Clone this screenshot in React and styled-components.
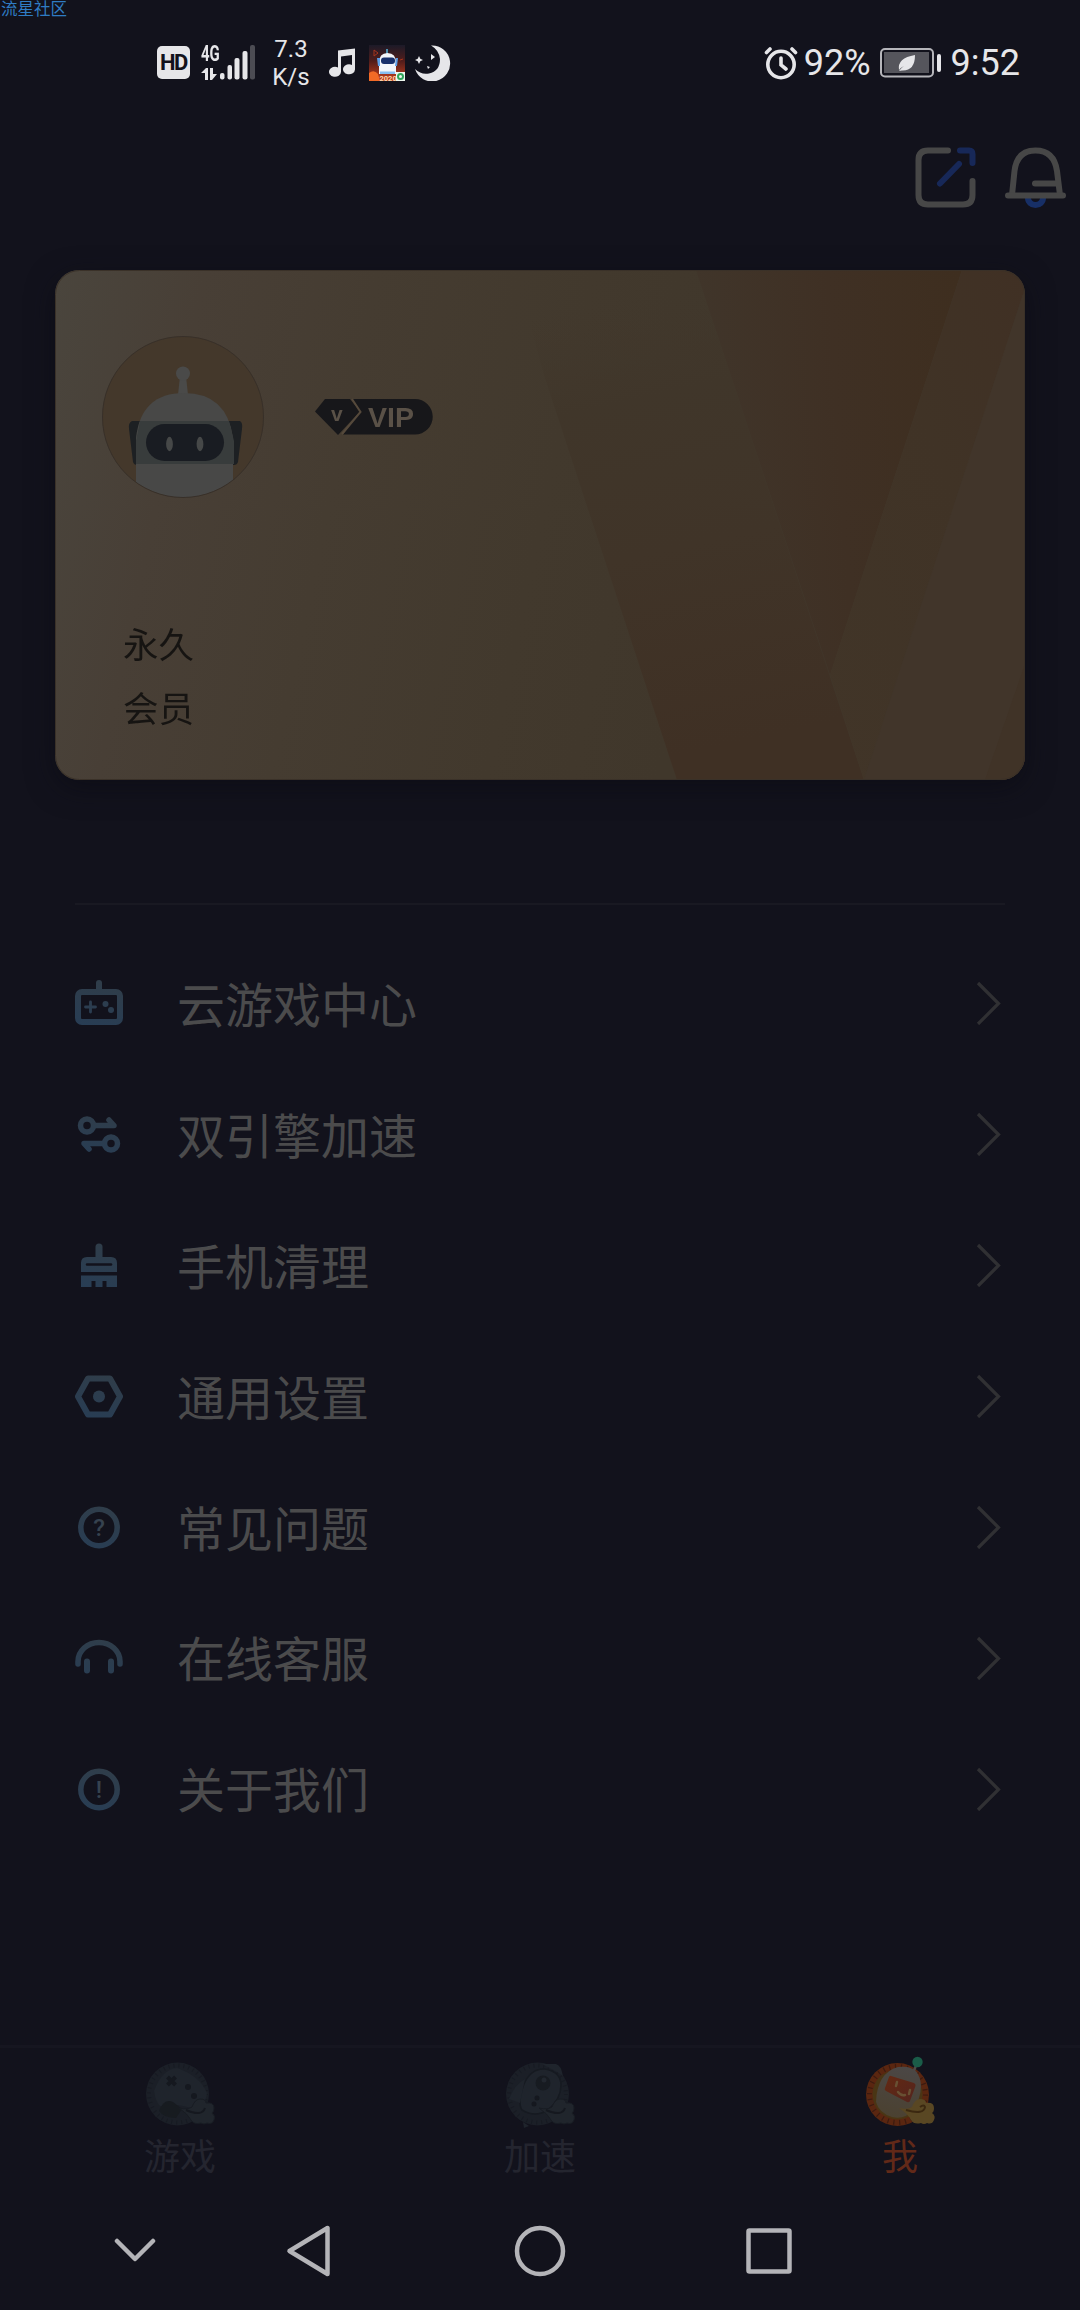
import React from 'react';
import styled, { createGlobalStyle } from 'styled-components';

const GlobalStyle = createGlobalStyle`
  :root {
    --bg: #12121c;
    --status: #e6e6e9;
    --cjk: 'Noto Sans CJK SC', sans-serif;
  }
  * {
    box-sizing: border-box;
  }
  body {
    margin: 0;
    background: var(--bg);
    font-family: Roboto, var(--cjk);
  }
  svg {
    display: block;
    flex: none;
  }
`;

const Screen = styled.main`
  position: relative;
  display: flex;
  flex-direction: column;
  width: 1080px;
  height: 2310px;
  background: var(--bg);
  overflow: hidden;
`;

const Watermark = styled.span`
  position: absolute;
  top: 0;
  left: 1px;
  color: #2f7cc4;
  font: 16.5px/16px var(--cjk);
`;

const StatusBar = styled.header`
  display: flex;
  justify-content: space-between;
  height: 125px;
  padding: 0 60px 0 157px;
  color: var(--status);
`;

const StatusGroup = styled.div`
  display: flex;
  align-items: center;
  height: 125px;
`;

const HdBadge = styled.span`
  display: flex;
  align-items: center;
  justify-content: center;
  width: 33px;
  height: 33px;
  border-radius: 5px;
  background: var(--status);
  color: var(--bg);
  font-size: 22px;
  font-weight: 700;
  letter-spacing: -1.5px;
`;

const Signal = styled.div`
  display: flex;
  align-items: flex-end;
  width: 54px;
  height: 35px;
  margin-left: 11px;
`;

const Network = styled.div`
  display: flex;
  flex-direction: column;
  justify-content: space-between;
  width: 18px;
  height: 35px;
  span {
    font-size: 22px;
    font-weight: 700;
    line-height: 18px;
    height: 18px;
    transform: scaleX(0.68);
    transform-origin: left;
  }
`;

const Speed = styled.div`
  width: 38px;
  margin-left: 17px;
  font-size: 24px;
  line-height: 28px;
  text-align: center;
`;

const StatusIcon = styled.svg`
  margin-left: ${({ $gap }) => $gap}px;
`;

const StatusText = styled.span`
  font-size: 36px;
  line-height: 42px;
  margin-left: ${({ $gap }) => $gap}px;
`;

const Toolbar = styled.div`
  display: flex;
  justify-content: flex-end;
  gap: 29px;
  height: 145px;
  padding: 22px 14px 0 0;
`;

const CardShadow = styled.div`
  display: flex;
  filter: drop-shadow(0 8px 14px rgba(8, 8, 16, 0.5));
`;

const Card = styled.section`
  position: relative;
  display: flex;
  flex-direction: column;
  justify-content: space-between;
  width: 970px;
  height: 510px;
  margin-left: 55px;
  padding: 66px 47px 38px;
  border-radius: 24px;
  overflow: hidden;
  background: linear-gradient(
    102deg,
    #4a453d 0%,
    #483f36 14%,
    #453c31 30%,
    #42392d 50%,
    #40372b 66%
  );
`;

const Facets = styled.svg`
  position: absolute;
  top: 0;
  left: 0;
`;

const Profile = styled.div`
  position: relative;
  display: flex;
  align-items: center;
`;

const VipBadge = styled.svg`
  margin-left: 51px;
`;

const Membership = styled.div`
  position: relative;
  padding-left: 21px;
  color: #161412;
  font-size: 35.5px;
  line-height: 64px;
  p {
    margin: 0;
  }
`;

const Divider = styled.hr`
  width: 930px;
  height: 2px;
  margin: 123px 0 33px 75px;
  border: 0;
  background: #191922;
`;

const Menu = styled.ul`
  margin: 0;
  padding: 0 75px;
  list-style: none;
`;

const MenuItem = styled.li`
  display: flex;
  align-items: center;
  height: 130.9px;
  color: #4b4b4c;
  span {
    flex: 1;
    margin-left: 54px;
    padding-top: 7px;
    font-size: 48px;
    line-height: 72px;
  }
`;

const TabBar = styled.nav`
  display: grid;
  grid-template-columns: repeat(3, 1fr);
  height: 142px;
  margin-top: auto;
  border-top: 3px solid #161620;
`;

const Tab = styled.div`
  display: flex;
  flex-direction: column;
  align-items: center;
  padding-top: 8px;
  color: ${({ $active }) => ($active ? '#622918' : '#24252f')};
  font-size: 36px;
  line-height: 54px;
`;

const SystemNav = styled.footer`
  display: flex;
  align-items: center;
  height: 123px;
  padding: 4px 0 0 113px;
`;

const NavIcon = styled.svg`
  margin-left: ${({ $gap }) => $gap || 0}px;
  fill: none;
  stroke: #b4b4b8;
  stroke-width: 4.5;
  stroke-linecap: round;
  stroke-linejoin: round;
`;

function StatusIcons() {
  return (
    <StatusBar>
      <StatusGroup>
        <HdBadge>HD</HdBadge>
        <Signal>
          <Network>
            <span>4G</span>
            <svg width="17" height="12" viewBox="0 0 17 12" fill="#e6e6e9">
              <path d="M0 5 5 0h2v12H4V5ZM9 0h3v6h4l-5 6H9Z" />
            </svg>
          </Network>
          <svg width="36" height="35" viewBox="0 0 36 35" fill="#e6e6e9">
            <rect x="1" y="28" width="4.5" height="6.5" rx="2" />
            <rect x="8.5" y="20" width="4.5" height="14.5" rx="2" />
            <rect x="15.5" y="13" width="5" height="21.5" rx="2" />
            <rect x="23.5" y="6" width="5" height="28.5" rx="2" />
            <rect x="31" y="0" width="5" height="34.5" rx="2" fill="#4c4c53" />
          </svg>
        </Signal>
        <Speed>
          7.3
          <br />
          K/s
        </Speed>
        <StatusIcon $gap={19} width="28" height="30" viewBox="0 0 28 30">
          <path
            d="M9 2.5 26 .5v21a6 5 0 1 1-3-4.5V7L12 8.5v15.500a6 5 0 1 1-3-4.5Z"
            fill="#e6e6e9"
          />
        </StatusIcon>
        <StatusIcon $gap={12} width="36" height="36" viewBox="0 0 36 36">
          <defs>
            <linearGradient id="app" x1="0" y1="0" x2="0" y2="1">
              <stop offset="0" stopColor="#1c1a28" />
              <stop offset="0.45" stopColor="#521d1b" />
              <stop offset="1" stopColor="#c8401c" />
            </linearGradient>
          </defs>
          <path d="M0 0h36v36H0z" fill="url(#app)" />
          <path d="m5 5 4 3-4 3zM31 15l3-1" stroke="#a8341c" fill="none" />
          <path d="M0 28q5-4 9 1l2 7H0z" fill="#f26a26" />
          <path d="M18 4v6" stroke="#58b7dc" strokeWidth="1.5" />
          <path d="M10 18q0-10 8.5-10T27 18v11H10z" fill="#f2f5fa" />
          <path d="M8 13h3v8H9zM27 13h2l-1 8h-2z" fill="#5c9ee6" />
          <rect x="12" y="12.5" width="14" height="6.5" rx="3" fill="#18306b" />
          <path d="M11 26.500h15V29H11z" fill="#86bdf0" />
          <text
            x="10.5"
            y="35.5"
            fill="#ffd9b0"
            fontSize="7.5"
            fontWeight="700"
            fontFamily="Roboto"
          >
            2020
          </text>
          <path d="M27 27h9v9h-9z" fill="#eef7ee" />
          <circle cx="31.5" cy="31.5" r="2.500" fill="none" stroke="#2fa65a" strokeWidth="2" />
        </StatusIcon>
        <StatusIcon $gap={10} width="36" height="36" viewBox="0 0 36 36" fill="#e6e6e9">
          <path d="M16 .5A18 18 0 1 1 0 24q6 6 14 4.500Q25 26 25 14 24 5 16 .5Z" />
          <path d="m4 11 1.300 2.700L8 15l-2.700 1.300L4 19l-1.300-2.700L0 15l2.700-1.300zM16 9l4 3-4 3zM12 21l3 1-2 2z" />
        </StatusIcon>
      </StatusGroup>
      <StatusGroup>
        <svg
          width="34"
          height="34"
          viewBox="0 0 34 34"
          fill="none"
          stroke="#e6e6e9"
          strokeWidth="3.6"
          strokeLinecap="round"
        >
          <circle cx="17" cy="18.5" r="13.2" />
          <path d="M17 12v7l5 4M2.500 6.500 6 3M28 3l3.500 3.500" />
        </svg>
        <StatusText $gap={6}>92%</StatusText>
        <StatusIcon $gap={9} width="61" height="30" viewBox="0 0 61 30">
          <rect x="1" y="1" width="52" height="27.5" rx="4" fill="none" stroke="#b5b5ba" strokeWidth="2" />
          <path d="M4 4h45v21H4z" fill="#55555c" />
          <path d="M19 23q2-3 5-5-4 2-5 4-2-12 16-15 0 16-13 15.500Z" fill="#e6e6e9" />
          <rect x="57" y="6" width="4" height="18" rx="2" fill="#e6e6e9" />
        </StatusIcon>
        <StatusText $gap={10}>9:52</StatusText>
      </StatusGroup>
    </StatusBar>
  );
}

function ShareIcon() {
  return (
    <svg
      width="61"
      height="61"
      viewBox="0 0 61 61"
      fill="none"
      stroke="#474747"
      strokeWidth="6"
      strokeLinecap="round"
    >
      <path d="M33 3.500H13Q3.500 3.500 3.500 13v35q0 9.500 9.500 9.500h35q9.500 0 9.500-9.500V34" />
      <path d="M45 3.500h9q3.500 0 3.500 3.500v9M25 36.500 44 17" stroke="#172858" />
    </svg>
  );
}

function BellIcon() {
  return (
    <svg
      width="61"
      height="61"
      viewBox="0 0 61 61"
      fill="none"
      stroke="#474747"
      strokeWidth="6"
      strokeLinecap="round"
    >
      <path d="M23 51a7.500 7 0 0 0 15 0" stroke="#172f66" />
      <path d="M7 48 9.500 24Q12 3.500 30.500 3.500T52 24l3 24M30 36.500h23" />
      <path d="M3 48.500h55" />
    </svg>
  );
}

function Avatar() {
  return (
    <svg width="162" height="162" viewBox="0 0 162 162">
      <defs>
        <clipPath id="round">
          <circle cx="81" cy="81" r="80.5" />
        </clipPath>
      </defs>
      <g clipPath="url(#round)">
        <path d="M0 0h162v162H0z" fill="#44382b" />
        <path d="M30 85h108q3 2 2 8l-4 33q-1 3-4 3H35q-3 0-4-3l-4-33q-1-6 3-8Z" fill="#1d2023" />
        <path d="M78 40h6l2 19h-10Z" fill="#4a4a49" />
        <circle cx="81" cy="37.5" r="7" fill="#4a4a49" />
        <path d="M34 162v-60Q39 57 82 57t49 45v60Z" fill="#484847" />
        <path d="M38 85h89l5 20v23H34v-23Z" fill="#383c3c" />
        <rect x="44" y="88" width="78" height="37" rx="18.5" fill="#191c22" />
        <ellipse cx="67.5" cy="108" rx="3.4" ry="7.2" fill="#464848" />
        <ellipse cx="98" cy="108" rx="3.4" ry="7.2" fill="#464848" />
      </g>
      <circle cx="81" cy="81" r="80.5" fill="none" stroke="#383029" />
    </svg>
  );
}

function Vip() {
  return (
    <VipBadge width="118" height="38" viewBox="0 0 118 38">
      <path d="M37 1h63a17.500 17.500 0 0 1 0 35.500H28l17-22Z" fill="#17171a" />
      <path d="M10 1h25l10 12.500L23 37 0 13.500Z" fill="#17171a" />
      <path d="m37 1 8.500 13L27 36" fill="none" stroke="#55493b" strokeWidth="2" />
      <g fill="#5a5147" fontFamily="Liberation Sans" fontWeight="700">
        <text x="16" y="23" fontSize="21">
          v
        </text>
        <text x="53" y="29.3" fontSize="28.5">
          VIP
        </text>
      </g>
    </VipBadge>
  );
}

function MembershipCard() {
  return (
    <CardShadow>
      <Card>
        <Facets width="970" height="510" viewBox="0 0 970 510">
          <defs>
            <linearGradient id="wedge" x1="0" y1="0.1" x2="1" y2="0">
              <stop offset="0" stopColor="#40352a" />
              <stop offset="0.5" stopColor="#3f3024" />
              <stop offset="1" stopColor="#3e2e1f" />
            </linearGradient>
            <linearGradient id="middle" x1="0" y1="0" x2="0.15" y2="1">
              <stop offset="0.1" stopColor="#41372b" stopOpacity="0" />
              <stop offset="0.3" stopColor="#40362a" />
              <stop offset="0.6" stopColor="#403428" />
              <stop offset="1" stopColor="#3f3024" />
            </linearGradient>
            <linearGradient id="strip" x1="1" y1="0" x2="0" y2="1">
              <stop offset="0" stopColor="#403024" />
              <stop offset="0.4" stopColor="#403326" />
              <stop offset="1" stopColor="#413528" />
            </linearGradient>
          </defs>
          <path d="M460 0h181l168 510H622L489 105Z" fill="url(#middle)" />
          <path d="M641 0h266L775 405Z" fill="url(#wedge)" />
          <path d="M907 0h63v18L809 510l-34-105Z" fill="url(#strip)" />
          <path d="M970 18v492H809Z" fill="#41352a" />
          <path d="M970 394v116h-40Z" fill="#403327" />
          <rect x="0.5" y="0.5" width="969" height="509" rx="24" fill="none" stroke="#3a3128" />
        </Facets>
        <Profile>
          <Avatar />
          <Vip />
        </Profile>
        <Membership>
          <p>永久</p>
          <p>会员</p>
        </Membership>
      </Card>
    </CardShadow>
  );
}

const menuItems = [
  {
    label: '云游戏中心',
    icon: (
      <>
        <rect x="3" y="13" width="42" height="30" rx="4" fill="none" strokeWidth="6" />
        <path d="M24 4v8" strokeWidth="6" />
        <path d="M10.500 28h10M15.500 23v10" strokeWidth="2.8" />
        <circle cx="30.5" cy="25" r="3" stroke="none" fill="url(#blue)" />
        <circle cx="36" cy="31" r="3" stroke="none" fill="url(#blue)" />
      </>
    ),
  },
  {
    label: '双引擎加速',
    icon: (
      <>
        <circle cx="12" cy="15.5" r="6.5" fill="none" strokeWidth="5.5" />
        <circle cx="36" cy="33.5" r="6.5" fill="none" strokeWidth="5.5" />
        <path d="M19 15.500h20l-5-5.500M29 33.500H9l5 5.500" fill="none" strokeWidth="5.5" />
      </>
    ),
  },
  {
    label: '手机清理',
    icon: (
      <>
        <path d="M24 6v14" strokeWidth="7" />
        <path
          d="M6 31V22q0-6 6-6h24q6 0 6 6v9ZM6 34.500h36V46H31.500v-6h-4v6h-7v-6h-4v6H6Z"
          fill="url(#blue)"
          stroke="none"
        />
        <path d="M12 23.500h24" stroke="#12121c" strokeWidth="2.5" />
      </>
    ),
  },
  {
    label: '通用设置',
    icon: (
      <>
        <path d="M13 6.500h22l10 18-10 18H13L3 24.500Z" fill="none" strokeWidth="6" />
        <circle cx="24" cy="24.5" r="6" stroke="none" fill="url(#blue)" />
      </>
    ),
  },
  {
    label: '常见问题',
    icon: (
      <>
        <circle cx="24" cy="24.5" r="18.2" fill="none" strokeWidth="5.5" />
        <text x="24" y="33" textAnchor="middle" fontSize="24" fontWeight="500" fill="#36424f" stroke="none">
          ?
        </text>
      </>
    ),
  },
  {
    label: '在线客服',
    icon: (
      <>
        <path d="M3 30v-2.500a21 19 0 0 1 42 0V30" fill="none" strokeWidth="5.5" />
        <path d="M12 27.500v9M36 27.500v9" strokeWidth="6" />
      </>
    ),
  },
  {
    label: '关于我们',
    icon: (
      <>
        <circle cx="24" cy="24.5" r="18.2" fill="none" strokeWidth="5.5" />
        <text x="24" y="33" textAnchor="middle" fontSize="24" fontWeight="500" fill="#36424f" stroke="none">
          !
        </text>
      </>
    ),
  },
];

function MenuIcon({ children }) {
  return (
    <svg
      width="48"
      height="48"
      viewBox="0 0 48 48"
      stroke="url(#blue)"
      strokeLinecap="round"
      strokeLinejoin="round"
    >
      <defs>
        <linearGradient
          id="blue"
          gradientUnits="userSpaceOnUse"
          x1="30"
          y1="0"
          x2="18"
          y2="48"
        >
          <stop offset="0" stopColor="#303d49" />
          <stop offset="1" stopColor="#283d54" />
        </linearGradient>
      </defs>
      {children}
    </svg>
  );
}

function Chevron() {
  return (
    <svg width="30" height="44" viewBox="0 0 30 44" fill="none" stroke="#303033" strokeWidth="3.2">
      <path d="M3 2 23.500 22.500 3 43" />
    </svg>
  );
}

const smoke =
  'M35 52q9 2 13-1 3-8 8-8 6 0 6 4 8-1 8 5 0 4-2 5 4 3 2 7-2 5-7 3-3 2-6 0-7 2-10-3-3-6-12-12Z';

function GameIcon() {
  return (
    <svg width="72" height="75" viewBox="0 0 72 75">
      <circle cx="33.5" cy="38" r="31.5" fill="#1b1f27" />
      <circle cx="33.5" cy="38" r="28.5" fill="none" stroke="#171a22" strokeWidth="4" strokeDasharray="1 4" />
      <path d="M10 35Q18 13 33 12q23 8 30 25-1 14-16 15-15-5-25-2-9 4-12-15Z" fill="#1f242c" />
      <path d="M15 55q5-13 14-9l9 7-6 9q-12 0-17-7Z" fill="#171b20" />
      <path d="m23.500 21 8 8M31.500 21l-8 8" stroke="#15181f" strokeWidth="4" />
      <circle cx="44" cy="31" r="3" fill="#15181f" />
      <circle cx="50" cy="40" r="3" fill="#15181f" />
      <path d={smoke} fill="#20252c" stroke="#181c23" />
      <path d="M42 54q16 7 19-2" stroke="#15181f" strokeWidth="2" fill="none" />
    </svg>
  );
}

function BoostIcon() {
  return (
    <svg width="72" height="75" viewBox="0 0 72 75">
      <circle cx="33.5" cy="38" r="31.5" fill="#1b1f27" />
      <circle cx="33.5" cy="38" r="28.5" fill="none" stroke="#171a22" strokeWidth="4" strokeDasharray="1 4" />
      <path d="M38 8h14q5 1 7 12l-6-4Z" fill="#1f242c" />
      <path
        d="M18 54q-5-8 2-26Q27 12 41 13q16 3 16 16 0 14-13 25-13 8-26 0Z"
        fill="#1f242c"
        stroke="#161a21"
        strokeWidth="1.5"
      />
      <path d="M5 43q6-15 16-20l-5 24Z" fill="#1f242c" />
      <circle cx="39" cy="27" r="7.5" fill="#171b21" />
      <circle cx="40" cy="24" r="2.5" fill="#22272f" />
      <circle cx="33" cy="42" r="2.5" fill="#15181f" />
      <circle cx="30" cy="48" r="2.5" fill="#15181f" />
      <path d={smoke} fill="#20252c" stroke="#181c23" />
      <path d="M42 54q16 7 19-2" stroke="#15181f" strokeWidth="2" fill="none" />
      <path d="m19 66 6 4-5 2Z" fill="#1f242c" />
    </svg>
  );
}

function MeIcon() {
  return (
    <svg width="72" height="75" viewBox="0 0 72 75">
      <defs>
        <linearGradient id="body" x1="0.5" y1="0" x2="0.3" y2="1">
          <stop offset="0" stopColor="#4b4745" />
          <stop offset="1" stopColor="#4b4130" />
        </linearGradient>
        <linearGradient id="face" x1="0" y1="0" x2="1" y2="1">
          <stop offset="0" stopColor="#632912" />
          <stop offset="1" stopColor="#53241e" />
        </linearGradient>
      </defs>
      <circle cx="33.5" cy="38.5" r="31.5" fill="#5a2610" />
      <circle cx="33.5" cy="38.5" r="28" fill="none" stroke="#3c1b10" strokeWidth="5" strokeDasharray="1.2 4.67" />
      <circle cx="33.5" cy="38.5" r="25" fill="#4a3514" />
      <path d="M49 17l4-10" stroke="#4f4b46" strokeWidth="2.5" />
      <circle cx="53.5" cy="6" r="5.2" fill="#1a5c48" />
      <path d="M12 46Q13 17 34 11q22-3 23 19 0 13-9 25-8 9-20 6-13-4-16-15Z" fill="url(#body)" />
      <path d="M27 20l23 7q2 1 1.500 3L46 45q-1 2-3 1L22 35q-2-1-1-3l4-11q1-2 2-1Z" fill="url(#face)" />
      <path d="m33 26-1 4M46 34l-1 4M34 36q3 4 7 3" stroke="#685033" strokeWidth="2.5" fill="none" strokeLinecap="round" />
      <path d={smoke} fill="#594723" />
      <path d="M42 54q18 5 19-3-1-3-5 0" stroke="#3b2810" strokeWidth="2" fill="none" />
    </svg>
  );
}

export default function App() {
  return (
    <Screen>
      <GlobalStyle />
      <Watermark>流星社区</Watermark>
      <StatusIcons />
      <Toolbar>
        <ShareIcon />
        <BellIcon />
      </Toolbar>
      <MembershipCard />
      <Divider />
      <Menu>
        {menuItems.map(({ label, icon }) => (
          <MenuItem key={label}>
            <MenuIcon>{icon}</MenuIcon>
            <span>{label}</span>
            <Chevron />
          </MenuItem>
        ))}
      </Menu>
      <TabBar>
        <Tab>
          <GameIcon />
          <span>游戏</span>
        </Tab>
        <Tab>
          <BoostIcon />
          <span>加速</span>
        </Tab>
        <Tab $active>
          <MeIcon />
          <span>我</span>
        </Tab>
      </TabBar>
      <SystemNav>
        <NavIcon width="44" height="26" viewBox="0 0 44 26">
          <path d="m4 3 18 18L40 3" />
        </NavIcon>
        <NavIcon $gap={128} width="48" height="54" viewBox="0 0 48 54">
          <path d="M42.500 4v46L4.500 27Z" />
        </NavIcon>
        <NavIcon $gap={180} width="54" height="54" viewBox="0 0 54 54">
          <circle cx="27" cy="27" r="23" />
        </NavIcon>
        <NavIcon $gap={177} width="50" height="50" viewBox="0 0 50 50">
          <rect x="4.5" y="4.5" width="41" height="41" rx="1" />
        </NavIcon>
      </SystemNav>
    </Screen>
  );
}
